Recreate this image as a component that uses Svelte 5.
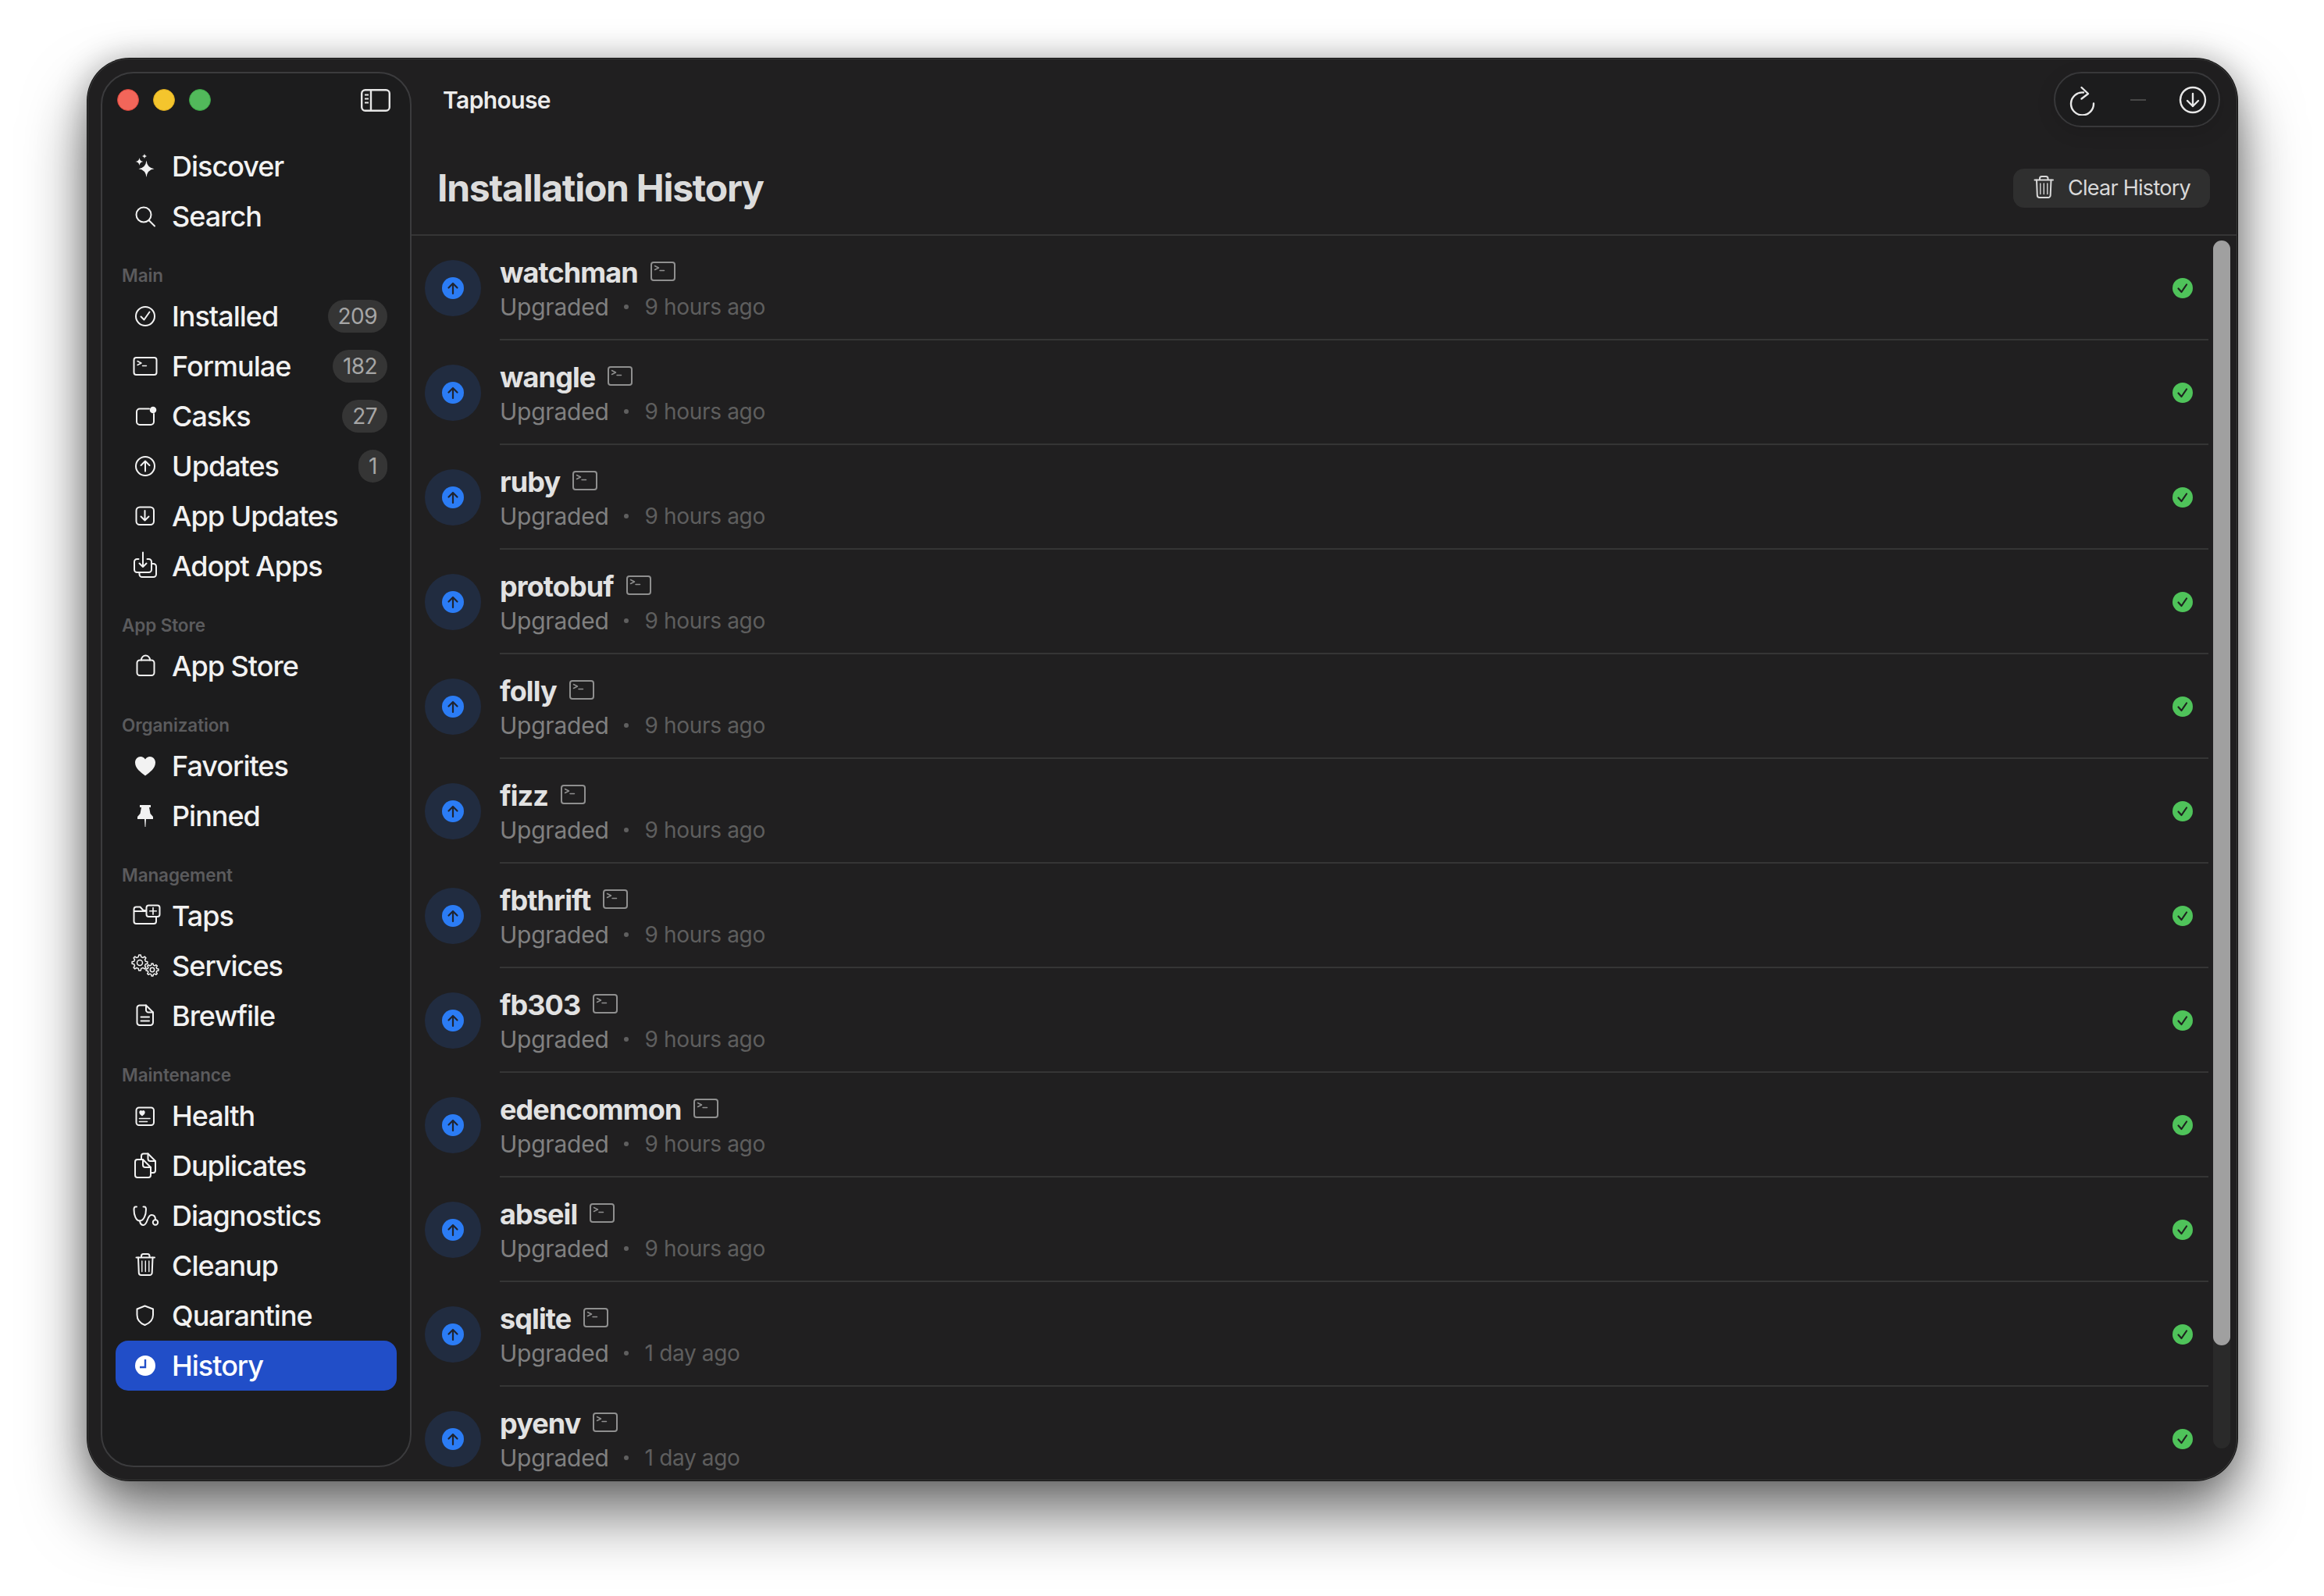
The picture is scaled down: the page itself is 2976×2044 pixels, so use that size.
<script>
	const sections = [
		{
			items: [
				{ name: "Discover", icon: "discover" },
				{ name: "Search", icon: "search" },
			],
		},
		{
			title: "Main",
			items: [
				{ name: "Installed", icon: "installed", count: 209 },
				{ name: "Formulae", icon: "terminal", count: 182 },
				{ name: "Casks", icon: "casks", count: 27 },
				{ name: "Updates", icon: "updates", count: 1 },
				{ name: "App Updates", icon: "appupdates" },
				{ name: "Adopt Apps", icon: "adopt" },
			],
		},
		{ title: "App Store", items: [{ name: "App Store", icon: "bag" }] },
		{
			title: "Organization",
			items: [
				{ name: "Favorites", icon: "heart" },
				{ name: "Pinned", icon: "pin" },
			],
		},
		{
			title: "Management",
			items: [
				{ name: "Taps", icon: "taps" },
				{ name: "Services", icon: "services" },
				{ name: "Brewfile", icon: "file" },
			],
		},
		{
			title: "Maintenance",
			items: [
				{ name: "Health", icon: "health" },
				{ name: "Duplicates", icon: "duplicates" },
				{ name: "Diagnostics", icon: "stethoscope" },
				{ name: "Cleanup", icon: "trash" },
				{ name: "Quarantine", icon: "shield" },
				{ name: "History", icon: "clock", active: true },
			],
		},
	];

	const history = [
		["watchman", "9 hours ago"],
		["wangle", "9 hours ago"],
		["ruby", "9 hours ago"],
		["protobuf", "9 hours ago"],
		["folly", "9 hours ago"],
		["fizz", "9 hours ago"],
		["fbthrift", "9 hours ago"],
		["fb303", "9 hours ago"],
		["edencommon", "9 hours ago"],
		["abseil", "9 hours ago"],
		["sqlite", "1 day ago"],
		["pyenv", "1 day ago"],
	];

	// outline of a cog, used twice by the services icon
	function gear(cx, cy, outer, inner, teeth) {
		const points = [];
		const step = (Math.PI * 2) / teeth;
		for (let i = 0; i < teeth; i++) {
			const a = i * step;
			for (const [offset, r] of [
				[-0.3, inner],
				[-0.16, outer],
				[0.16, outer],
				[0.3, inner],
			]) {
				const x = cx + Math.cos(a + offset * step) * r;
				const y = cy + Math.sin(a + offset * step) * r;
				points.push(x.toFixed(2) + " " + y.toFixed(2));
			}
		}
		return "M" + points.join("L") + "Z";
	}
</script>

{#snippet icon(name)}
	<svg class="icon" viewBox="0 0 40 40" fill="none" stroke="currentColor" stroke-width="2" stroke-linecap="round" stroke-linejoin="round">
		{#if name === "discover"}
			<g fill="currentColor" stroke="none">
				<path d="M21.500 12.500Q22.500 22 31.500 23.200Q22.500 24.400 21.500 34Q20.500 24.400 11.500 23.200Q20.500 22 21.500 12.500Z" />
				<path d="M12.500 9Q13 13.400 17.500 14Q13 14.600 12.500 19Q12 14.600 7.500 14Q12 13.400 12.500 9Z" />
				<path d="M19 4Q19.300 6.700 22 7Q19.300 7.300 19 10Q18.700 7.300 16 7Q18.700 6.700 19 4Z" />
			</g>
		{:else if name === "search"}
			<circle cx="18" cy="18" r="9.500" />
			<path d="M25 25.500L32 32.500" />
		{:else if name === "installed"}
			<circle cx="20" cy="20" r="12" />
			<path d="M14.500 20.500L18.500 24.500L25.500 14.500" />
		{:else if name === "terminal"}
			<rect x="5.500" y="9" width="29" height="22" rx="3" />
			<path d="M10 13.500L15 16L10 18.500M16.500 19.500H21.500" stroke-width="1.400" />
		{:else if name === "casks"}
			<path d="M25 10.500H13A4 4 0 0 0 9 14.500V27A4 4 0 0 0 13 31H27A4 4 0 0 0 31 27V17" />
			<circle cx="30" cy="12" r="4.300" fill="currentColor" stroke="none" />
		{:else if name === "updates"}
			<circle cx="20" cy="20" r="12" />
			<path d="M20 26.500V13.500M14.500 19L20 13.500L25.500 19" />
		{:else if name === "appupdates"}
			<rect x="8.500" y="8.500" width="22.500" height="22.500" rx="4.500" />
			<path d="M19.500 13V25.500M14.500 20.500L19.500 25.500L24.500 20.500" />
		{:else if name === "adopt"}
			<path d="M11.500 11H9.500A3.500 3.500 0 0 0 6 14.500V24.500A3.500 3.500 0 0 0 9.500 28H24.500A3.500 3.500 0 0 0 28 24.500V14.500A3.500 3.500 0 0 0 24.500 11H22.500" />
			<path d="M17 2.500V21M12.500 16.500L17 21L21.500 16.500" />
			<path d="M12.500 28.500V30.500A3.500 3.500 0 0 0 16 34H30.500A3.500 3.500 0 0 0 34 30.500V20.500A3.500 3.500 0 0 0 30.500 17H28.500" />
		{:else if name === "bag"}
			<rect x="9.500" y="12.500" width="22" height="19.500" rx="3.500" />
			<path d="M15 12.500V12A5.500 5.500 0 0 1 26 12V12.500" />
		{:else if name === "heart"}
			<path fill="currentColor" stroke="none" d="M20 32.500C14 28 7 23 7 15.500C7 11 10.500 8 14 8C16.500 8 18.700 9.300 20 11.500C21.300 9.300 23.500 8 26 8C29.500 8 33 11 33 15.500C33 23 26 28 20 32.500Z" />
		{:else if name === "pin"}
			<path fill="currentColor" stroke="none" d="M13 6H27V9H25L26.500 17L30 21V24H21L20.400 34H19.600L19 24H10V21L13.500 17L15 9H13Z" />
		{:else if name === "taps"}
			<path d="M20 30H8.500A3 3 0 0 1 5.500 27V11.500A3 3 0 0 1 8.500 8.500H13.500L17.500 13H20.500M5.500 14H20.500M34 21.500V27A3 3 0 0 1 31 30H20" />
			<rect x="21.500" y="6.500" width="17" height="14.500" rx="3" />
			<path d="M30 9.500V18M25.800 13.750H34.200" stroke-width="1.700" />
		{:else if name === "services"}
			<g stroke-width="1.500">
				<path d={gear(13, 16, 10, 7.6, 8)} />
				<circle cx="13" cy="16" r="3.500" />
				<path d={gear(29, 25, 8, 6, 8)} />
				<circle cx="29" cy="25" r="2.700" />
			</g>
		{:else if name === "file"}
			<path d="M12.500 6.500H21L30 15.500V28.500A3.500 3.500 0 0 1 26.500 32H12.500A3.500 3.500 0 0 1 9.500 28.500V9.500A3.500 3.500 0 0 1 12.500 6.500Z" />
			<path d="M21 6.500V12.500A3 3 0 0 0 24 15.500H30M14.500 21.500H25M14.500 26.500H25" />
		{:else if name === "health"}
			<rect x="8.500" y="9.500" width="22.500" height="22.500" rx="3.500" />
			<path fill="currentColor" stroke="none" d="M16 20.500C14 19 12.300 17.500 12.300 15.500C12.300 14 13.300 13 14.500 13C15.100 13 15.700 13.300 16 14C16.300 13.300 16.900 13 17.500 13C18.700 13 19.700 14 19.700 15.500C19.700 17.500 18 19 16 20.500Z" />
			<path d="M12.500 23.500H26M12.500 27.500H22.500" stroke-width="1.600" />
		{:else if name === "duplicates"}
			<path d="M15 11V7.500A3 3 0 0 1 18 4.500H23.500L33 14V26A3 3 0 0 1 30 29H27" />
			<path d="M23.500 4.500V11A3 3 0 0 0 26.500 14H33" />
			<path d="M10 12H17L27 22V32A3 3 0 0 1 24 35H10A3 3 0 0 1 7 32V15A3 3 0 0 1 10 12Z" />
			<path d="M17 12V19A3 3 0 0 0 20 22H27" />
		{:else if name === "stethoscope"}
			<path d="M9 8.500H7.500C6 8.500 5.500 10 5.500 12C5.500 19 8 26.500 13 26.500C18 26.500 21 19 21 12C21 10 20.500 8.500 19 8.500H17.500" />
			<path d="M13 26.500C13.500 30 15 32 17.500 32C23.500 32 22 19 28 19C31.500 19 33 21.500 33 25" />
			<circle cx="33" cy="28.500" r="3.200" />
		{:else if name === "trash"}
			<path d="M8.500 9.500H32M15 9.500V7.500A2.500 2.500 0 0 1 17.500 5H23A2.500 2.500 0 0 1 25.500 7.500V9.500" />
			<path d="M11 9.500L11.800 29A3 3 0 0 0 14.800 32H25.700A3 3 0 0 0 28.700 29L29.500 9.500" />
			<path d="M15.800 14V27.500M20.300 14V27.500M24.800 14V27.500" stroke-width="1.400" />
		{:else if name === "shield"}
			<path d="M19.500 7.500L30 11.500V19C30 25 26 29.500 19.500 32C13 29.500 9.500 25 9.500 19V11.500Z" />
		{:else if name === "clock"}
			<circle cx="20" cy="20" r="13" fill="currentColor" stroke="none" />
			<path d="M20 12V22H13" stroke="#214ec8" stroke-width="2.400" stroke-linecap="butt" stroke-linejoin="miter" />
		{/if}
	</svg>
{/snippet}

<div class="page">
	<main class="window">
		<aside class="sidebar">
			<div class="titlebar">
				<div class="lights">
					<span class="light red"></span>
					<span class="light yellow"></span>
					<span class="light green"></span>
				</div>
				<svg class="toggle" viewBox="0 0 38 29" fill="none" stroke="currentColor" stroke-width="2.400">
					<rect x="1.200" y="1.200" width="35.600" height="26.600" rx="4.500" />
					<path d="M13 1.200V27.800" />
					<path d="M5 7.500H10M5 12.500H10M5 17.500H10" stroke-width="2" />
				</svg>
			</div>

			<nav>
				{#each sections as section}
					{#if section.title}
						<div class="section">{section.title}</div>
					{/if}
					{#each section.items as item}
						<div class="item" class:active={item.active}>
							{@render icon(item.icon)}
							<span class="label">{item.name}</span>
							{#if item.count}
								<span class="badge">{item.count}</span>
							{/if}
						</div>
					{/each}
				{/each}
			</nav>
		</aside>

		<section class="content">
			<header class="topbar">
				<span class="appname">Taphouse</span>
				<div class="pill">
					<svg class="pill-icon" viewBox="0 0 40 40" fill="none" stroke="currentColor" stroke-width="2.400" stroke-linecap="round" stroke-linejoin="round">
						<path d="M34 24.500A14.500 14.500 0 1 1 21 10.500" />
						<path d="M18.500 4L27 12L18.500 18.500" />
					</svg>
					<span class="pill-dash"></span>
					<svg class="pill-icon" viewBox="0 0 40 40" fill="none" stroke="currentColor" stroke-width="2.400" stroke-linecap="round" stroke-linejoin="round">
						<circle cx="20" cy="20" r="16" />
						<path d="M20 12V28M13 21L20 28L27 21" />
					</svg>
				</div>
			</header>

			<div class="heading">
				<h1>Installation History</h1>
				<button class="clear">
					{@render icon("trash")}
					<span>Clear History</span>
				</button>
			</div>

			<div class="list">
				{#each history as [name, when]}
					<div class="row">
						<div class="status">
							<svg viewBox="0 0 28 28" fill="none" stroke="#1f2430" stroke-width="2.200" stroke-linecap="round" stroke-linejoin="round">
								<circle cx="14" cy="14" r="14" fill="#2b7cf5" stroke="none" />
								<path d="M14 21V8M8.500 13.500L14 8L19.500 13.500" />
							</svg>
						</div>
						<div class="body">
							<div class="text">
								<div class="title">
									<span class="name">{name}</span>
									<svg class="kind" viewBox="0 0 32 25" fill="none" stroke="currentColor" stroke-width="2" stroke-linecap="round" stroke-linejoin="round">
										<rect x="1" y="1" width="30" height="23" rx="3" />
										<path d="M5.500 5.500L10.500 8L5.500 10.500M12 11.500H17.500" stroke-width="1.500" />
									</svg>
								</div>
								<div class="meta">
									<span class="action">Upgraded</span>
									<span class="dot"></span>
									<span class="when">{when}</span>
								</div>
							</div>
							<svg class="done" viewBox="0 0 26 26" fill="none" stroke="#1f2420" stroke-width="2.200" stroke-linecap="round" stroke-linejoin="round">
								<circle cx="13" cy="13" r="13" fill="#4fc35a" stroke="none" />
								<path d="M7.500 13.500L11.500 18L18 8.500" />
							</svg>
						</div>
					</div>
				{/each}
			</div>

			<div class="scrollbar"><div class="thumb"></div></div>
		</section>
	</main>
</div>

<style>
	:global(body) {
		background: #fff;
		font-family: Inter, "Liberation Sans", sans-serif;
	}

	.page {
		box-sizing: border-box;
		height: 2044px;
		padding: 75px 0 0 112px;
		overflow: hidden;
	}

	.window {
		position: relative;
		display: flex;
		box-sizing: border-box;
		width: 2753px;
		height: 1821px;
		background: #201f20;
		border-radius: 54px;
		overflow: hidden;
		box-shadow:
			0 0 0 1px #0c0c0c,
			inset 0 0 0 1px #3a3a3a,
			0 44px 80px rgba(0, 0, 0, 0.55),
			0 0 40px rgba(0, 0, 0, 0.25);
	}

	.sidebar {
		box-sizing: border-box;
		flex: none;
		width: 398px;
		margin: 17px 0 17px 17px;
		padding: 0 17px;
		background: #1c1c1d;
		border: 2px solid #3b3b3d;
		border-radius: 42px;
		color: #f2f2f2;
	}

	.titlebar {
		display: flex;
		align-items: center;
		justify-content: space-between;
		height: 70px;
		margin-top: -1px;
		padding: 0 8px 0 2px;
	}

	.lights {
		display: flex;
		gap: 18px;
	}

	.light {
		box-sizing: border-box;
		width: 28px;
		height: 28px;
		border-radius: 50%;
	}

	.red {
		background: #f2665a;
		border: 1px solid #d6443a;
	}

	.yellow {
		background: #f4c52d;
		border: 1px solid #d9a820;
	}

	.green {
		background: #52b95b;
		border: 1px solid #3aa345;
	}

	.toggle {
		width: 38px;
		height: 29px;
		color: #e6e6e6;
	}

	nav {
		margin-top: 18px;
	}

	.section {
		height: 40px;
		margin-top: 24px;
		padding-left: 8px;
		font-size: 22.5px;
		font-weight: 600;
		line-height: 40px;
		letter-spacing: -0.005em;
		color: #5b5b5d;
	}

	.item {
		display: flex;
		align-items: center;
		height: 64px;
		padding: 0 12px 0 18px;
		border-radius: 16px;
		font-size: 36px;
		font-weight: 450;
		letter-spacing: -0.028em;
	}

	.item.active {
		background: #214ec8;
		color: #fff;
	}

	.icon {
		flex: none;
		width: 40px;
		height: 40px;
	}

	.label {
		flex: 1;
		margin-left: 14px;
		white-space: nowrap;
	}

	.badge {
		box-sizing: border-box;
		height: 42px;
		min-width: 37px;
		padding: 0 13px;
		border-radius: 21px;
		background: #353535;
		font-size: 28px;
		font-weight: 400;
		line-height: 42px;
		letter-spacing: -0.02em;
		color: #a6a6a6;
	}

	.content {
		position: relative;
		display: flex;
		flex: 1;
		flex-direction: column;
		min-width: 0;
	}

	.topbar {
		display: flex;
		flex: none;
		align-items: center;
		justify-content: space-between;
		height: 71px;
		margin-top: 17px;
		padding: 0 22px 0 40px;
	}

	.appname {
		font-size: 30px;
		font-weight: 600;
		letter-spacing: -0.02em;
		color: #ececec;
	}

	.pill {
		box-sizing: border-box;
		display: flex;
		align-items: center;
		justify-content: space-between;
		width: 213px;
		height: 71px;
		padding: 0 13px 0 15px;
		border: 2px solid #38383a;
		border-radius: 36px;
		background: #1c1c1d;
		color: #e8e8e8;
		box-shadow: 0 6px 24px rgba(0, 0, 0, 0.12);
	}

	.pill-icon {
		width: 40px;
		height: 40px;
	}

	.pill-dash {
		width: 20px;
		height: 2px;
		background: #474747;
	}

	.heading {
		display: flex;
		flex: none;
		align-items: center;
		justify-content: space-between;
		box-sizing: border-box;
		height: 139px;
		padding: 17px 35px 0 33px;
		border-bottom: 2px solid #353535;
	}

	h1 {
		margin: 0;
		font-size: 48px;
		font-weight: 700;
		letter-spacing: -0.026em;
		color: #dcdcdc;
	}

	.clear {
		display: flex;
		align-items: center;
		height: 50px;
		margin-top: 1px;
		padding: 0 25px 0 19px;
		border: 0;
		border-radius: 14px;
		background: #2f2f2f;
		font-family: inherit;
		font-size: 27px;
		letter-spacing: -0.027em;
		color: #d9d9d9;
	}

	.clear span {
		margin-left: 11px;
	}

	.list {
		flex: 1;
		min-height: 0;
		overflow: hidden;
	}

	.row {
		display: flex;
		align-items: center;
		height: 134px;
		padding-left: 17px;
	}

	.status {
		display: flex;
		flex: none;
		align-items: center;
		justify-content: center;
		width: 72px;
		height: 72px;
		border-radius: 50%;
		background: #212c40;
	}

	.status svg {
		width: 28px;
		height: 28px;
	}

	.body {
		box-sizing: border-box;
		display: flex;
		flex: none;
		align-items: center;
		justify-content: space-between;
		width: 2188px;
		height: 134px;
		margin-left: 24px;
		padding: 0 20px 0 0;
		border-bottom: 2px solid #353535;
	}

	.text {
		padding-top: 5px;
	}

	.title {
		display: flex;
		align-items: center;
		height: 44px;
	}

	.name {
		font-size: 36px;
		font-weight: 700;
		letter-spacing: -0.025em;
		color: #e2e2e2;
	}

	.kind {
		width: 32px;
		height: 25px;
		margin: -3px 0 0 16px;
		color: #8f8f8f;
	}

	.meta {
		display: flex;
		align-items: center;
		height: 44px;
	}

	.action {
		font-size: 30px;
		letter-spacing: -0.008em;
		color: #808080;
	}

	.dot {
		width: 6px;
		height: 6px;
		margin: 0 21px 0 19px;
		border-radius: 50%;
		background: #5f5f5f;
	}

	.when {
		font-size: 28px;
		letter-spacing: -0.012em;
		color: #5e5e5e;
	}

	.done {
		width: 26px;
		height: 26px;
		margin-top: 2px;
	}

	/* overlay scroller, sits on top of the list */
	.scrollbar {
		position: absolute;
		top: 233px;
		right: 9px;
		bottom: 41px;
		width: 22px;
		border-radius: 11px;
		background: #2a2a2a;
	}

	.thumb {
		height: 1415px;
		border-radius: 11px;
		background: #a0a0a0;
	}
</style>
